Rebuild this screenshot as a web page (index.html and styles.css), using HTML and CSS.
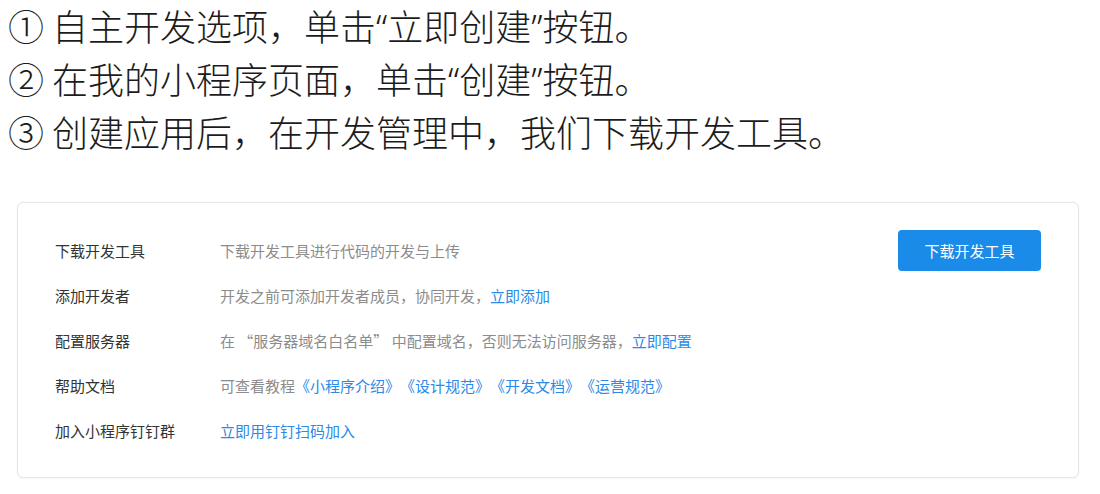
FILE: index.html
```html
<!DOCTYPE html>
<html lang="zh-CN">
<head>
<meta charset="utf-8">
<link rel="stylesheet" href="styles.css">
</head>
<body>
<div class="page">
  <div class="steps">
    <p class="step">① 自主开发选项，单击<span class="q">“</span>立即创建<span class="q">”</span>按钮。</p>
    <p class="step">② 在我的小程序页面，单击<span class="q">“</span>创建<span class="q">”</span>按钮。</p>
    <p class="step">③ 创建应用后，在开发管理中，我们下载开发工具。</p>
  </div>
  <div class="card">
    <div class="row">
      <div class="label">下载开发工具</div>
      <div class="value">下载开发工具进行代码的开发与上传</div>
      <button class="btn">下载开发工具</button>
    </div>
    <div class="row">
      <div class="label">添加开发者</div>
      <div class="value">开发之前可添加开发者成员，协同开发，<a class="link">立即添加</a></div>
    </div>
    <div class="row">
      <div class="label">配置服务器</div>
      <div class="value">在 “服务器域名白名单” 中配置域名，否则无法访问服务器，<a class="link">立即配置</a></div>
    </div>
    <div class="row">
      <div class="label">帮助文档</div>
      <div class="value">可查看教程<a class="link">《小程序介绍》</a><a class="link">《设计规范》</a><a class="link">《开发文档》</a><a class="link">《运营规范》</a></div>
    </div>
    <div class="row">
      <div class="label">加入小程序钉钉群</div>
      <div class="value"><a class="link">立即用钉钉扫码加入</a></div>
    </div>
  </div>
</div>
</body>
</html>
```
FILE: styles.css
```css
* { box-sizing: border-box; }
html, body {
  margin: 0;
  padding: 0;
  background: #ffffff;
}
body {
  font-family: "Noto Sans CJK SC", "Noto Sans", sans-serif;
  color: #1e1e1e;
  width: 1100px;
  height: 494px;
  overflow: hidden;
  text-spacing-trim: space-all;
}
.steps {
  padding-left: 8px;
}
.step {
  margin: 0;
  font-size: 36px;
  line-height: 51px;
  font-weight: 300;
  color: #1c1c1c;
  white-space: nowrap;
}
.q {
  font-family: "Noto Sans", sans-serif;
  font-weight: 300;
}
.card {
  margin: 45px 0 0 17px;
  width: 1062px;
  height: 276px;
  border: 1px solid #e6e6e6;
  border-radius: 6px;
  padding: 25px 37px 0 37px;
  box-shadow: 0 1px 3px rgba(0,0,0,0.04);
}
.row {
  display: flex;
  align-items: center;
  height: 45px;
  font-size: 15px;
}
.label {
  width: 165px;
  flex: none;
  color: #333333;
}
.value {
  flex: 1;
  color: #8c8c8c;
}
.link {
  color: #2b8ae6;
  cursor: pointer;
}
.btn {
  flex: none;
  width: 143px;
  height: 41px;
  border: none;
  border-radius: 4px;
  background: #1b8be9;
  color: #ffffff;
  font-family: "Noto Sans CJK SC", sans-serif;
  font-size: 15px;
  cursor: pointer;
}
```
